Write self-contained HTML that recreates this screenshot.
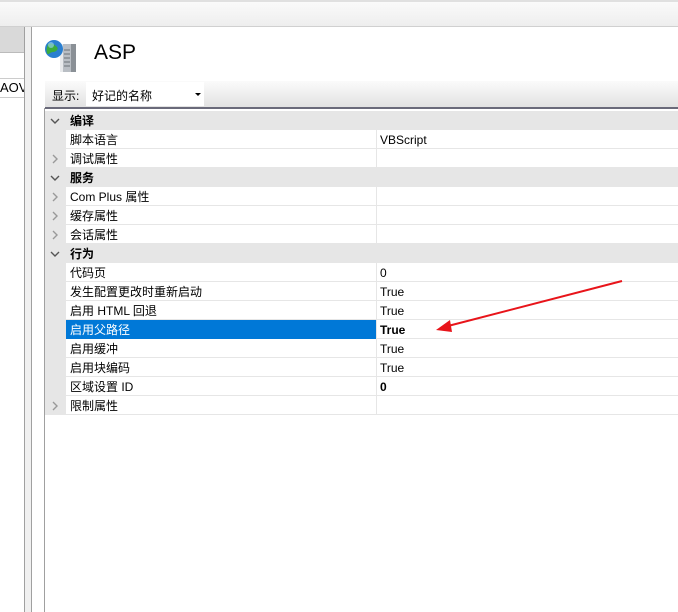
<!DOCTYPE html>
<html><head><meta charset="utf-8"><style>
*{margin:0;padding:0;box-sizing:border-box}
body{width:678px;height:612px;overflow:hidden;background:#fff;position:relative;font-family:"Liberation Sans","Noto Sans CJK SC",sans-serif;font-size:12px;color:#000}
.abs{position:absolute}
.row{position:absolute;left:45px;right:0;height:19px;border-bottom:1px solid #e6e6e6}
.row .g{position:absolute;left:0;top:0;width:21px;height:19px;background:#e6e6e6}
.row .n{position:absolute;left:25px;top:1px;white-space:nowrap}
.row .v{position:absolute;left:331px;top:0;right:0;height:18px;border-left:1px solid #e6e6e6;padding:3px 0 0 3px;white-space:nowrap}
.hd{background:#e6e6e6}
.hd .n{font-weight:bold}
.sel .n{color:#fff}
.sel .bl{position:absolute;left:21px;top:0;width:310px;height:19px;background:#0078d7}
.ic{position:absolute;left:5px;top:5px}
</style></head><body>
<div class="abs" style="left:0;top:0;width:678px;height:27px;background:linear-gradient(#fafafa,#eeeeee);border-top:2px solid #e0e0e0;border-bottom:1px solid #d0d0d0"></div>
<div class="abs" style="left:0;top:27px;width:24px;height:26px;background:#d9d9d9;border-bottom:1px solid #bbb"></div>
<div class="abs" style="left:0;top:78px;width:24px;height:20px;border-top:1px solid #ccc;border-bottom:1px solid #ccc;overflow:hidden;font-size:13px;padding-top:1px">AOV</div>
<div class="abs" style="left:24px;top:27px;width:1px;height:585px;background:#a0a0a0"></div>
<div class="abs" style="left:25px;top:27px;width:6px;height:585px;background:#f0f0f0"></div>
<div class="abs" style="left:31px;top:27px;width:1px;height:585px;background:#a0a0a0"></div>
<div class="abs" style="left:44px;top:108px;width:1px;height:504px;background:#a0a0a0"></div>
<svg class="abs" style="left:43px;top:38px" width="36" height="34" viewBox="0 0 36 34">
<rect x="17" y="6" width="16" height="28" fill="#b9bec4"/><rect x="17" y="6" width="3" height="28" fill="#e8eaec"/><rect x="28" y="6" width="5" height="28" fill="#8a9096"/>
<g stroke="#6c7278" stroke-width="1"><line x1="21" y1="12" x2="27" y2="12"/><line x1="21" y1="16" x2="27" y2="16"/><line x1="21" y1="20" x2="27" y2="20"/><line x1="21" y1="24" x2="27" y2="24"/><line x1="21" y1="28" x2="27" y2="28"/></g>
<circle cx="11" cy="11" r="9" fill="#2a7fd0"/><path d="M5 6c4-2 7 1 9 3s-1 5-4 5-5 4-6 1 0-6 1-9z" fill="#3cac3c"/><circle cx="8" cy="7" r="3" fill="#9fd3ff" opacity=".6"/>
</svg>
<div class="abs" style="left:94px;top:41px;font-size:21px">ASP</div>
<div class="abs" style="left:45px;top:81px;width:633px;height:28px;background:linear-gradient(#fbfbfb,#e2e2e2);border-bottom:2px solid #6a6a7a"></div>
<div class="abs" style="left:52px;top:87px;font-size:12px">显示:</div>
<div class="abs" style="left:86px;top:82px;width:118px;height:24px;background:#fff"></div>
<div class="abs" style="left:92px;top:87px;font-size:12px">好记的名称</div>
<div class="abs" style="left:195px;top:93px;width:0;height:0;border-left:3px solid transparent;border-right:3px solid transparent;border-top:3px solid #000"></div>

<svg width="0" height="0" style="position:absolute"><defs>
<symbol id="dn" viewBox="0 0 10 10"><polyline points="1,3 5,7 9,3" fill="none" stroke="#555" stroke-width="1.4"/></symbol>
<symbol id="rt" viewBox="0 0 10 10"><polyline points="3,1 7,5 3,9" fill="none" stroke="#999" stroke-width="1.4"/></symbol>
</defs></svg>

<div class="row hd" style="top:111px"><svg class="ic" width="10" height="10"><use href="#dn"/></svg><span class="n">编译</span></div>
<div class="row" style="top:130px"><div class="g"></div><span class="n">脚本语言</span><span class="v">VBScript</span></div>
<div class="row" style="top:149px"><div class="g"></div><svg class="ic" width="10" height="10"><use href="#rt"/></svg><span class="n">调试属性</span><span class="v"></span></div>
<div class="row hd" style="top:168px"><svg class="ic" width="10" height="10"><use href="#dn"/></svg><span class="n">服务</span></div>
<div class="row" style="top:187px"><div class="g"></div><svg class="ic" width="10" height="10"><use href="#rt"/></svg><span class="n">Com Plus 属性</span><span class="v"></span></div>
<div class="row" style="top:206px"><div class="g"></div><svg class="ic" width="10" height="10"><use href="#rt"/></svg><span class="n">缓存属性</span><span class="v"></span></div>
<div class="row" style="top:225px"><div class="g"></div><svg class="ic" width="10" height="10"><use href="#rt"/></svg><span class="n">会话属性</span><span class="v"></span></div>
<div class="row hd" style="top:244px"><svg class="ic" width="10" height="10"><use href="#dn"/></svg><span class="n">行为</span></div>
<div class="row" style="top:263px"><div class="g"></div><span class="n">代码页</span><span class="v">0</span></div>
<div class="row" style="top:282px"><div class="g"></div><span class="n">发生配置更改时重新启动</span><span class="v">True</span></div>
<div class="row" style="top:301px"><div class="g"></div><span class="n">启用 HTML 回退</span><span class="v">True</span></div>
<div class="row sel" style="top:320px"><div class="g"></div><div class="bl"></div><span class="n">启用父路径</span><span class="v" style="font-weight:bold">True</span></div>
<div class="row" style="top:339px"><div class="g"></div><span class="n">启用缓冲</span><span class="v">True</span></div>
<div class="row" style="top:358px"><div class="g"></div><span class="n">启用块编码</span><span class="v">True</span></div>
<div class="row" style="top:377px"><div class="g"></div><span class="n">区域设置 ID</span><span class="v" style="font-weight:bold">0</span></div>
<div class="row" style="top:396px"><div class="g"></div><svg class="ic" width="10" height="10"><use href="#rt"/></svg><span class="n">限制属性</span><span class="v"></span></div>

<svg class="abs" style="left:0;top:0" width="678" height="612">
<line x1="622" y1="281" x2="448" y2="326" stroke="#e8141a" stroke-width="2"/>
<polygon points="436,330 450,320 452,332" fill="#e8141a"/>
</svg>
</body></html>
